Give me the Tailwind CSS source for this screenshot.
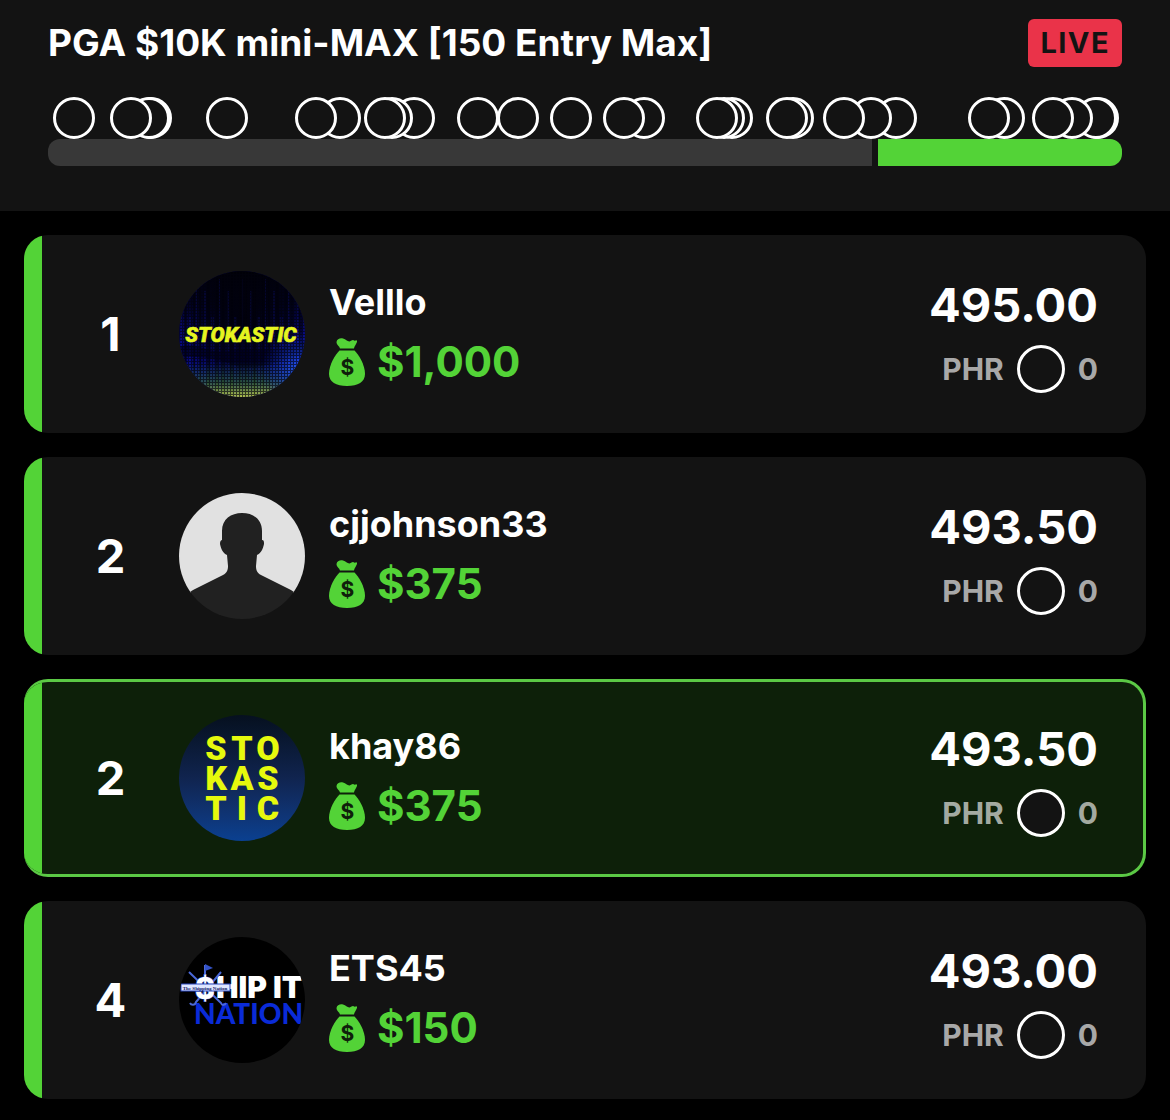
<!DOCTYPE html>
<html lang="en">
<head>
  <meta charset="UTF-8">
  <meta name="viewport" content="width=device-width, initial-scale=1.0">
  <title>PGA $10K mini-MAX - Leaderboard</title>
  <script src="https://cdn.jsdelivr.net/npm/@tailwindcss/browser@4"></script>
</head>
<body class="bg-black text-white font-['Inter',sans-serif] font-bold min-h-screen">
  <svg class="hidden">
    <symbol id="bag" viewBox="0 0 36 48">
      <path fill="#53d337" d="M11 10.500 C10.500 8 7.500 7 7.500 4 C8 .8 11 -.2 14 .4 C17 1 18 3.500 20.500 3.400 C22.500 3 23 1.800 24.500 2.200 C25.500 3 26.500 2.500 27.500 2.200 C28.800 3 27.500 5 27 6 C26.500 7.500 25.200 8.500 25 10.500 Z"/>
      <path fill="#53d337" d="M10.500 12.500 H25.500 C30 17 36 27 36 36 C36 44 29 48 18 48 C7 48 0 44 0 36 C0 27 6 17 10.500 12.500 Z"/>
      <text x="18.500" y="37" text-anchor="middle" font-family="Inter" font-size="21" font-weight="700" fill="#0f1f0b">$</text>
    </symbol>
  </svg>

  <header class="bg-[#131313] px-12 pt-[19px] pb-[45px]">
    <div class="flex items-center justify-between h-12">
      <h1 class="text-[37px] leading-12">PGA $10K mini-MAX [150 Entry Max]</h1>
      <span class="bg-[#ea3349] text-[#131313] text-[29px] leading-12 tracking-wider rounded-md px-3">LIVE</span>
    </div>
    <div id="markers" class="relative h-[42px] mt-[30px]"></div>
    <div class="flex gap-1.5 h-[27px] rounded-xl overflow-hidden">
      <div class="bg-[#383838]" style="width: 76.72%"></div>
      <div class="bg-[#53d337] flex-1"></div>
    </div>
  </header>

  <ol class="flex flex-col gap-6 p-6 pb-5">
    <li class="flex items-center h-[198px] rounded-3xl overflow-hidden bg-[#131313]">
      <div class="w-[18px] h-full bg-[#53d337]"></div>
      <div class="w-[137px] text-center text-[47px]">1</div>
      <svg class="size-[126px] rounded-full shrink-0" viewBox="0 0 126 126">
        <defs>
          <radialGradient id="glow" cx=".5" cy=".4" r=".62">
            <stop offset="0" stop-color="#00000c"/>
            <stop offset=".5" stop-color="#020230"/>
            <stop offset="1" stop-color="#080a98"/>
          </radialGradient>
          <linearGradient id="shade" x2="0" y2="1">
            <stop offset="0" stop-color="#000006"/>
            <stop offset=".25" stop-color="#000006" stop-opacity=".7"/>
            <stop offset=".5" stop-color="#000006" stop-opacity="0"/>
          </linearGradient>
          <linearGradient id="dotFade" x2="0" y2="1">
            <stop offset=".72" stop-color="#1f6a4c" stop-opacity="0"/>
            <stop offset=".88" stop-color="#3f7a2c" stop-opacity=".6"/>
            <stop offset="1" stop-color="#c8d84a" stop-opacity=".9"/>
          </linearGradient>
          <radialGradient id="side" cx=".95" cy=".78" r=".3">
            <stop offset="0" stop-color="#2a62ff" stop-opacity=".9"/>
            <stop offset="1" stop-color="#1030e0" stop-opacity="0"/>
          </radialGradient>
          <pattern id="mesh" width="3" height="3" patternUnits="userSpaceOnUse">
            <path fill="#01010c" opacity=".65" d="M0 0h3v1h-3z M0 1h1v2h-1z"/>
          </pattern>
          <pattern id="streaks" width="23" height="126" patternUnits="userSpaceOnUse">
            <path fill="#1418c8" opacity=".15" d="M2 20h2v106h-2z M9 46h3v80h-3z M17 8h1v118h-1z"/>
            <path fill="#000008" opacity=".5" d="M5 0h3v126h-3z M14 0h2v126h-2z M20 0h2v126h-2z"/>
          </pattern>
        </defs>
        <rect width="126" height="126" fill="url(#glow)"/>
        <rect width="126" height="126" fill="url(#shade)"/>
        <rect width="126" height="126" fill="url(#streaks)"/>
        <path fill="#00001c" opacity=".7" d="M0 76 C20 70 30 84 50 80 C70 74 90 86 126 70 V84 C100 88 90 98 60 96 C50 92 30 84 0 86 Z"/>
        <rect width="126" height="126" fill="url(#dotFade)"/>
        <rect width="126" height="126" fill="url(#side)"/>
        <rect width="126" height="126" fill="url(#mesh)"/>
        <text x="62" y="71" text-anchor="middle" font-family="Roboto,sans-serif" font-size="21" font-weight="900" font-style="italic" fill="#e6f520" stroke="#e6f520" stroke-width=".6">STOKASTIC</text>
      </svg>
      <div class="flex-1 pl-6">
        <div class="text-[36px] leading-[48px]">Velllo</div>
        <div class="flex items-center gap-3 mt-3 mb-1 text-[#53d337] text-[42px] leading-12">
          <svg class="w-9 h-12"><use href="#bag"/></svg>$1,000
        </div>
      </div>
      <div class="flex flex-col items-end gap-2.5 pr-12">
        <div class="text-[47px] leading-[60px]">495.00</div>
        <div class="flex items-center gap-[13px] text-[#a8a8a8] text-[30px] leading-12">
          PHR<span class="size-12 rounded-full border-3 border-white bg-[#131313]"></span>0
        </div>
      </div>
    </li>

    <li class="flex items-center h-[198px] rounded-3xl overflow-hidden bg-[#131313]">
      <div class="w-[18px] h-full bg-[#53d337]"></div>
      <div class="w-[137px] text-center text-[47px]">2</div>
      <svg class="size-[126px] rounded-full shrink-0" viewBox="0 0 126 126">
        <path fill="#e1e1e1" d="M0 0 H126 V100 H0 Z"/>
        <path fill="#212121" d="M0 106 C10 100 12 98 16 96 L44 82 C48 80 49 77 49 73 L48 62 C44 60 42 56 41 51 C41 48 42 47 43 47 V38 C43 26 52 20 63 20 C74 20 83 26 83 38 V47 C85 47 85 49 85 51 C84 56 82 60 78 62 L77 73 C77 77 78 80 82 82 L110 96 C114 98 116 100 126 106 V126 H0 Z"/>
      </svg>
      <div class="flex-1 pl-6">
        <div class="text-[36px] leading-[48px]">cjjohnson33</div>
        <div class="flex items-center gap-3 mt-3 mb-1 text-[#53d337] text-[42px] leading-12">
          <svg class="w-9 h-12"><use href="#bag"/></svg>$375
        </div>
      </div>
      <div class="flex flex-col items-end gap-2.5 pr-12">
        <div class="text-[47px] leading-[60px]">493.50</div>
        <div class="flex items-center gap-[13px] text-[#a8a8a8] text-[30px] leading-12">
          PHR<span class="size-12 rounded-full border-3 border-white bg-[#131313]"></span>0
        </div>
      </div>
    </li>

    <li class="flex items-center h-[198px] rounded-3xl overflow-hidden bg-[#0d2009] border-3 border-l-0 border-[#5bc945]">
      <div class="w-[18px] h-full bg-[#53d337]"></div>
      <div class="w-[137px] text-center text-[47px]">2</div>
      <div class="size-[126px] rounded-full shrink-0 flex items-center justify-center bg-linear-to-b from-[#06101f] via-[#10244f] to-[#0a4090]">
        <div class="grid grid-cols-[repeat(3,26px)] text-center text-[#e6f90d] font-['Roboto',sans-serif] font-black text-[34px] leading-[30px]">
          <span>S</span><span>T</span><span>O</span>
          <span>K</span><span>A</span><span>S</span>
          <span>T</span><span>I</span><span>C</span>
        </div>
      </div>
      <div class="flex-1 pl-6">
        <div class="text-[36px] leading-[48px]">khay86</div>
        <div class="flex items-center gap-3 mt-3 mb-1 text-[#53d337] text-[42px] leading-12">
          <svg class="w-9 h-12"><use href="#bag"/></svg>$375
        </div>
      </div>
      <div class="flex flex-col items-end gap-2.5 pr-[45px]">
        <div class="text-[47px] leading-[60px]">493.50</div>
        <div class="flex items-center gap-[13px] text-[#a3aaa1] text-[30px] leading-12">
          PHR<span class="size-12 rounded-full border-3 border-white bg-[#131313]"></span>0
        </div>
      </div>
    </li>

    <li class="flex items-center h-[198px] rounded-3xl overflow-hidden bg-[#131313]">
      <div class="w-[18px] h-full bg-[#53d337]"></div>
      <div class="w-[137px] text-center text-[47px]">4</div>
      <svg class="size-[126px] rounded-full shrink-0" viewBox="0 0 126 126">
        <rect width="126" height="126" fill="#000"/>
        <text x="15" y="87" font-family="Lato,sans-serif" font-size="28" font-weight="900" fill="#0a2bd8">NATION</text>
        <text x="37" y="61" font-family="Inter,sans-serif" font-size="30" font-weight="900" fill="#fff">HIP IT</text>
        <g stroke="#4a68d8" stroke-width="2" fill="none">
          <path d="M10 35 L42 66 C43 69 46 68 47 66"/>
          <path d="M42 35 L17 65 C16 69 12 68 11 66"/>
          <path d="M26 28 V40"/>
        </g>
        <path fill="#3453c8" d="M26 27 L34 31 L26 34 Z"/>
        <text x="26" y="62" text-anchor="middle" font-family="Inter,sans-serif" font-size="30" font-weight="800" fill="#fff" stroke="#2a48c0" stroke-width="1" paint-order="stroke">$</text>
        <rect x="2" y="47" width="49" height="7" fill="#dfe6ff" stroke="#2a48c0"/>
        <text x="26" y="53" text-anchor="middle" font-family="'Liberation Serif',serif" font-size="5" font-weight="700" fill="#10206a">The Shipping Nation</text>
      </svg>
      <div class="flex-1 pl-6">
        <div class="text-[36px] leading-[48px]">ETS45</div>
        <div class="flex items-center gap-3 mt-3 mb-1 text-[#53d337] text-[42px] leading-12">
          <svg class="w-9 h-12"><use href="#bag"/></svg>$150
        </div>
      </div>
      <div class="flex flex-col items-end gap-2.5 pr-12">
        <div class="text-[47px] leading-[60px]">493.00</div>
        <div class="flex items-center gap-[13px] text-[#a8a8a8] text-[30px] leading-12">
          PHR<span class="size-12 rounded-full border-3 border-white bg-[#131313]"></span>0
        </div>
      </div>
    </li>
  </ol>

  <script>
    // marker offsets on a 1074 unit track, leftmost marker on top
    const positions = [5, 62, 80, 82, 158, 247, 271, 316, 323, 345, 409, 449, 502, 555, 575,
      648, 655, 663, 718, 724, 775, 802, 827, 920, 935, 984, 1003, 1027, 1029];
    const track = document.getElementById('markers');

    positions.reverse().forEach(pos => {
      const dot = document.createElement('span');
      dot.className = 'absolute top-0 size-[42px] rounded-full border-3 border-white bg-[#131313]';
      dot.style.left = (pos / 1074 * 100) + '%';
      track.appendChild(dot);
    });
  </script>
</body>
</html>
